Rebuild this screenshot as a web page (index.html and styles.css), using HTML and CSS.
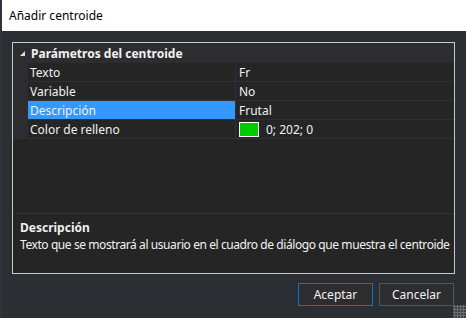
FILE: index.html
```html
<!DOCTYPE html>
<html>
<head>
  <meta charset="UTF-8">
  <title>Añadir centroide</title>
  <link rel="stylesheet" href="styles.css">
</head>
<body>
  <div class="window">
    <div class="titlebar">Añadir centroide</div>
    <div class="content">
      <div class="panel">
        <div class="grid">
          <div class="category">
            <span class="arrow"></span>
            <span class="category-name">Parámetros del centroide</span>
          </div>
          <div class="row">
            <div class="name">Texto</div>
            <div class="value">Fr</div>
          </div>
          <div class="row">
            <div class="name">Variable</div>
            <div class="value">No</div>
          </div>
          <div class="row selected">
            <div class="name">Descripción</div>
            <div class="value">Frutal</div>
          </div>
          <div class="row">
            <div class="name">Color de relleno</div>
            <div class="value"><span class="swatch"></span>0; 202; 0</div>
          </div>
          <div class="filler"></div>
        </div>
        <div class="help">
          <div class="help-title">Descripción</div>
          <div class="help-text">Texto que se mostrará al usuario en el cuadro de diálogo que muestra el centroide</div>
        </div>
      </div>
      <div class="buttons">
        <button class="btn default">Aceptar</button>
        <button class="btn">Cancelar</button>
      </div>
    </div>
    <div class="grip"></div>
  </div>
</body>
</html>
```

FILE: styles.css
```css
body {
  margin: 0;
  font-family: "Noto Sans", "Open Sans", sans-serif;
  font-size: 12px;
  background-color: #2b2e33;
}
.window {
  width: 466px;
  height: 318px;
  display: flex;
  flex-direction: column;
  position: relative;
  background-color: #2b2e33;
  border-left: 2px solid #30343a;
  box-sizing: border-box;
}
.titlebar {
  height: 31px;
  background-color: #ffffff;
  color: #000000;
  display: flex;
  align-items: center;
  padding-left: 7px;
  padding-bottom: 1px;
  box-sizing: border-box;
}
.content {
  flex: 1;
  padding: 11px 11px 0 10px;
  display: flex;
  flex-direction: column;
}
.panel {
  height: 232px;
  box-sizing: border-box;
  border: 1px solid #c9c9c9;
  background-color: #252526;
  display: flex;
  flex-direction: column;
  color: #f1f1f1;
}
.grid {
  flex: 1;
  display: flex;
  flex-direction: column;
}
.category {
  height: 20px;
  background-color: #2d2d30;
  display: flex;
  align-items: center;
  font-weight: bold;
}
.arrow {
  width: 0;
  height: 0;
  margin-left: 7px;
  margin-right: 6px;
  border-left: 5px solid transparent;
  border-bottom: 5px solid #e0e0e0;
}
.row {
  height: 19px;
  display: flex;
  border-left: 15px solid #2d2d30;
}
.name {
  width: 205px;
  padding-left: 2px;
  border-right: 1px solid #303032;
  border-bottom: 1px solid #303032;
  display: flex;
  align-items: center;
}
.value {
  flex: 1;
  padding-left: 3px;
  border-bottom: 1px solid #303032;
  display: flex;
  align-items: center;
}
.selected .name {
  background-color: #3399ff;
}
.swatch {
  width: 18px;
  height: 13px;
  border: 1px solid #ffffff;
  background-color: #00ca00;
  margin-right: 7px;
}
.filler {
  flex: 1;
  border-left: 15px solid #252526;
}
.help {
  height: 60px;
  border-top: 1px solid #333335;
  padding: 5px 7px 0 7px;
  box-sizing: border-box;
}
.help-title {
  font-weight: bold;
  line-height: 17px;
}
.help-text {
  line-height: 17px;
  white-space: nowrap;
  letter-spacing: -0.42px;
}
.buttons {
  display: flex;
  justify-content: flex-end;
  gap: 6px;
  margin-top: 9px;
  padding-right: 1px;
}
.btn {
  width: 75px;
  height: 23px;
  background-color: #2d2d30;
  color: #f1f1f1;
  border: 1px solid #555555;
  font-family: "Noto Sans", "Open Sans", sans-serif;
  font-size: 12px;
  padding: 0;
}
.btn.default {
  border-color: #0078d7;
}
.grip {
  position: absolute;
  right: 0;
  bottom: 0;
  width: 13px;
  height: 13px;
  background-color: #3c3f44;
  background-image: radial-gradient(circle, #6a6d72 1px, transparent 1.2px);
  background-size: 3px 3px;
}
```
